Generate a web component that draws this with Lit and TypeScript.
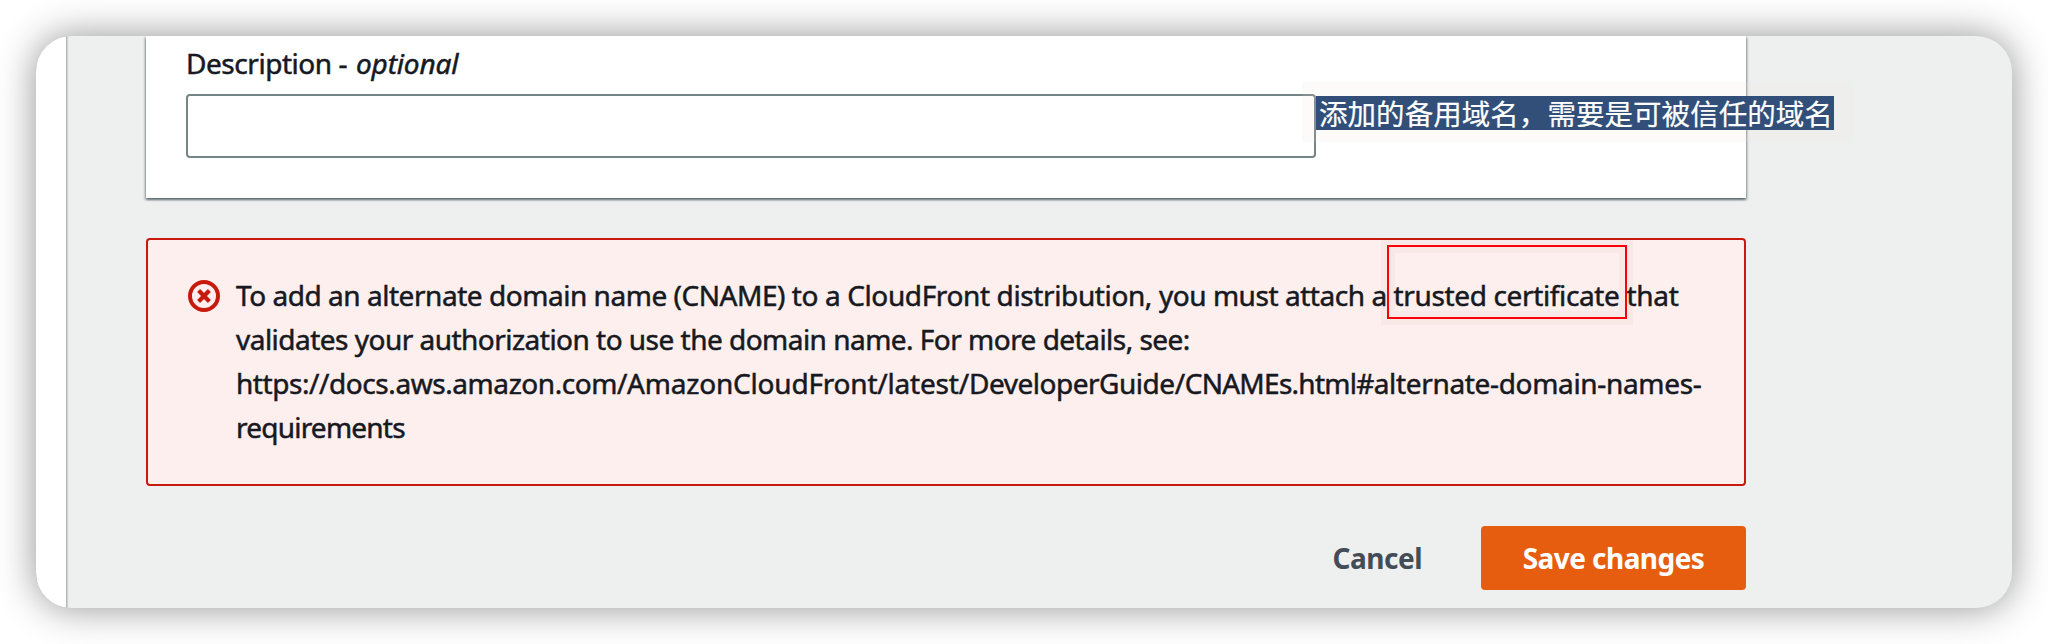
import { LitElement, html, css } from 'lit';
import { customElement } from 'lit/decorators.js';

type Run = { text: string; spacing: number; marked?: boolean };

const MESSAGE: Run[][] = [
  [
    { text: 'To add an alternate domain name (CNAME) ', spacing: -0.46 },
    { text: 'to a CloudFront distribution, ', spacing: -0.38 },
    { text: 'you must attach a ', spacing: -0.45 },
    { text: 'trusted certificate ', spacing: -0.36, marked: true },
    { text: 'that', spacing: -0.3 },
  ],
  [{ text: 'validates your authorization to use the domain name. For more details, see:', spacing: -0.52 }],
  [
    { text: 'https://docs.aws.amazon.com/', spacing: -0.43 },
    { text: 'AmazonCloudFront/latest/', spacing: -0.2 },
    { text: 'DeveloperGuide/', spacing: -0.47 },
    { text: 'CNAMEs.html#', spacing: -0.72 },
    { text: 'alternate-domain-names-', spacing: -0.33 },
  ],
  [{ text: 'requirements', spacing: -0.78 }],
];

@customElement('app-root')
export class AppRoot extends LitElement {
  static styles = css`
    :host {
      display: block;
      box-sizing: border-box;
      height: 644px;
      padding: 36px;
      overflow: hidden;
      background: #fff;
      color: #16191f;
      font: 28px/44px 'Noto Sans', 'Open Sans', sans-serif;
      -webkit-text-stroke: 0.5px currentColor;
    }
    .window {
      display: flex;
      width: 1976px;
      height: 572px;
      border-radius: 36px;
      overflow: hidden;
      background: #eef0f0;
      box-shadow: 0 0 38px rgba(0, 0, 0, 0.43);
    }
    .nav {
      flex: none;
      width: 30px;
      background: #fff;
      box-shadow: 0 0 2px 1px rgba(0, 28, 36, 0.4);
    }
    .main {
      width: 1600px;
      margin-left: 80px;
      display: flex;
      flex-direction: column;
    }
    .card {
      box-sizing: border-box;
      height: 162px;
      padding: 6px 40px 0;
      background: #fff;
      box-shadow: 0 2px 2px rgba(0, 28, 36, 0.4), 2px 2px 2px rgba(0, 28, 36, 0.15),
        -2px 2px 2px rgba(0, 28, 36, 0.15), 0 0 2px rgba(0, 28, 36, 0.3);
    }
    .label {
      height: 52px;
      line-height: 42px;
      letter-spacing: -0.45px;
      white-space: pre;
    }
    .optional {
      margin-left: 2px;
      letter-spacing: -0.15px;
    }
    .field {
      position: relative;
      box-sizing: border-box;
      width: 1130px;
      height: 64px;
      border: 2px solid #748586;
      border-radius: 4px;
      background: #fff;
    }
    .note {
      position: absolute;
      left: 1114px;
      top: -14px;
      width: 552px;
      height: 60px;
      background: rgba(240, 225, 205, 0.13);
    }
    .note-text {
      position: absolute;
      left: 14px;
      top: 14px;
      box-sizing: border-box;
      width: 518px;
      height: 34px;
      padding-left: 3px;
      background: #314f79;
      color: #fff;
      font: 28.5px/33px 'Noto Sans CJK SC', sans-serif;
      letter-spacing: 0.05px;
      -webkit-text-stroke: 0.2px currentColor;
      white-space: nowrap;
    }
    .alert {
      box-sizing: border-box;
      height: 248px;
      margin-top: 40px;
      padding: 33px 0 0 40px;
      display: flex;
      gap: 16px;
      border: 2px solid #c7190c;
      border-radius: 4px;
      background: #fdefed;
    }
    .icon {
      flex: none;
      width: 32px;
      height: 32px;
      margin-top: 7px;
    }
    .line {
      height: 44px;
      white-space: pre;
    }
    .marked {
      position: relative;
    }
    .frame {
      position: absolute;
      left: -7px;
      top: -31px;
      box-sizing: border-box;
      width: 240px;
      height: 74px;
      border: 2px solid #fb0007;
      box-shadow: 0 0 0 6px rgba(100, 60, 60, 0.035), inset 0 0 0 6px rgba(100, 60, 60, 0.035);
    }
    .actions {
      display: flex;
      justify-content: flex-end;
      align-items: center;
      gap: 59px;
      margin-top: 40px;
      font-weight: 700;
      -webkit-text-stroke: 0;
    }
    .cancel {
      color: #444c56;
      letter-spacing: -0.5px;
    }
    .save {
      width: 265px;
      height: 64px;
      border-radius: 4px;
      background: #e65d10;
      color: #fff;
      line-height: 64px;
      text-align: center;
      letter-spacing: -0.55px;
    }
  `;

  private run(r: Run) {
    const style = `letter-spacing:${r.spacing}px`;
    return r.marked
      ? html`<span class="marked" style=${style}>${r.text}<span class="frame"></span></span>`
      : html`<span style=${style}>${r.text}</span>`;
  }

  render() {
    return html`
      <div class="window">
        <div class="nav"></div>
        <div class="main">
          <div class="card">
            <div class="label">Description - <i class="optional">optional</i></div>
            <div class="field">
              <div class="note"><div class="note-text">添加的备用域名，需要是可被信任的域名</div></div>
            </div>
          </div>
          <div class="alert">
            <svg class="icon" viewBox="0 0 32 32" fill="none" stroke="#c7190c" stroke-width="4">
              <circle cx="16" cy="16" r="14" />
              <path stroke-width="4.2" d="M10.6 10.6 21.4 21.4M21.4 10.6 10.6 21.4" />
            </svg>
            <div>${MESSAGE.map((line) => html`<div class="line">${line.map((r) => this.run(r))}</div>`)}</div>
          </div>
          <div class="actions">
            <span class="cancel">Cancel</span>
            <div class="save">Save changes</div>
          </div>
        </div>
      </div>
    `;
  }
}
